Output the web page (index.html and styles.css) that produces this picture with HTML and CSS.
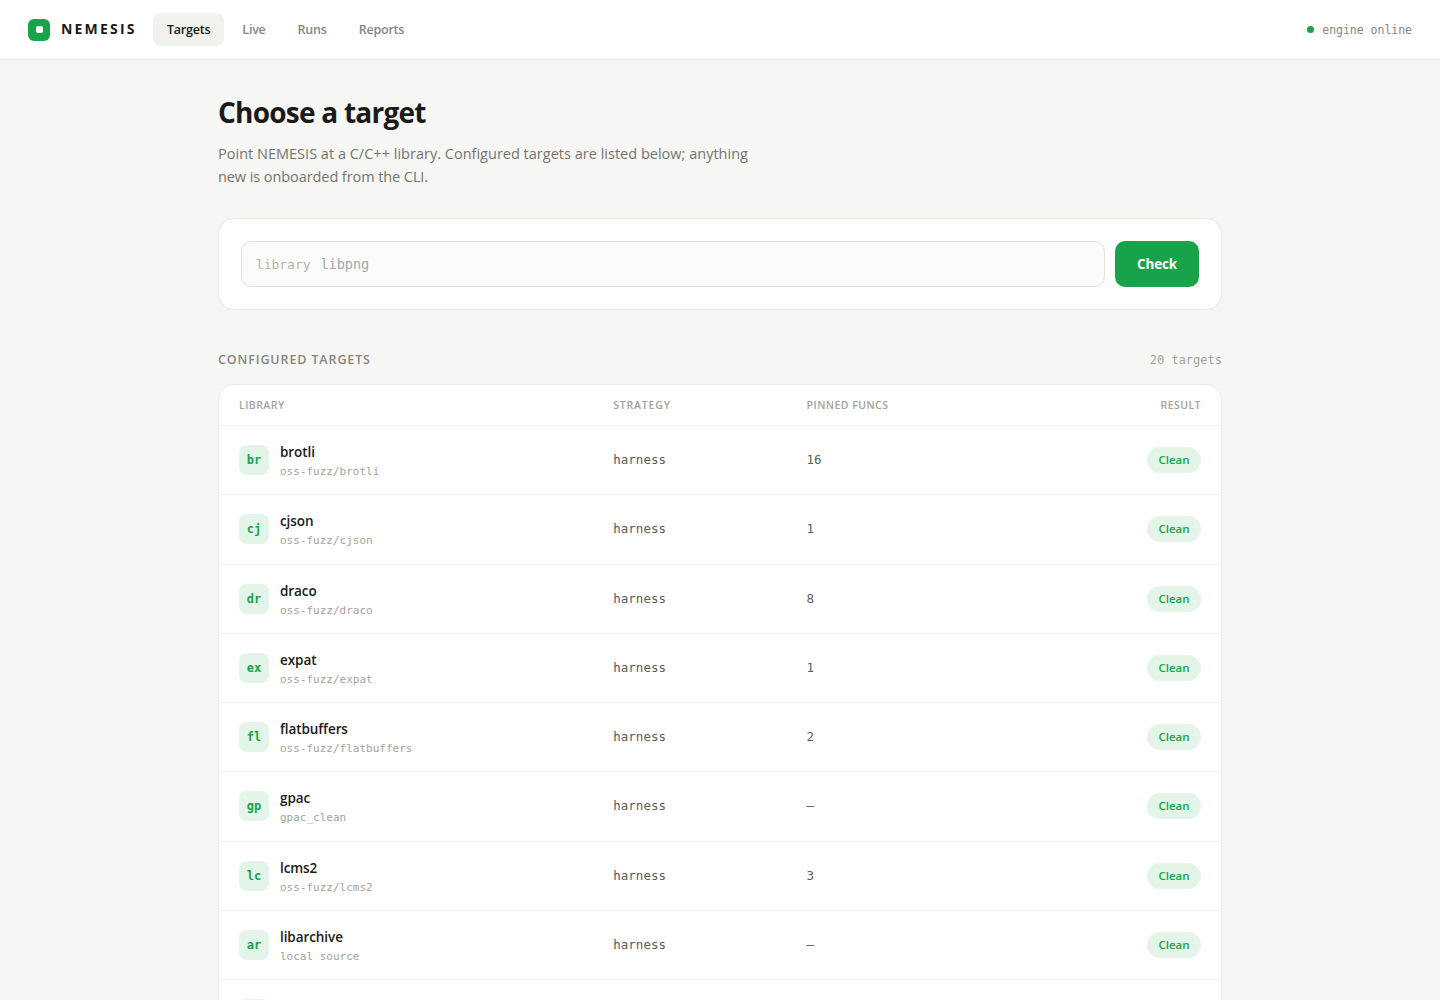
FILE: index.html
```html
<!DOCTYPE html>
<html lang="en">
<head>
<meta charset="utf-8">
<title>NEMESIS</title>
<link rel="stylesheet" href="styles.css">
</head>
<body>
<header class="topbar">
  <div class="brand"><span class="logo"></span><span class="brand-name">NEMESIS</span></div>
  <nav class="nav">
    <a class="active">Targets</a><a>Live</a><a>Runs</a><a>Reports</a>
  </nav>
  <div class="status"><span class="dot"></span><span>engine online</span></div>
</header>
<main class="page">
  <h1>Choose a target</h1>
  <p class="lead">Point NEMESIS at a C/C++ library. Configured targets are listed below; anything<br><span>new is onboarded from the CLI.</span></p>
  <section class="card search">
    <label class="field"><span>library</span><input type="text" placeholder="libpng"></label>
    <button class="check">Check</button>
  </section>
  <div class="section-head"><h2>Configured targets</h2><span>20 targets</span></div>
  <section class="card table">
    <div class="row head"><span>Library</span><span class="wide">Strategy</span><span>Pinned funcs</span><span>Result</span></div>
    <div class="row"><div class="lib"><span class="tile">br</span><div class="names"><b>brotli</b><small>oss-fuzz/brotli</small></div></div><span class="mono">harness</span><span class="mono">16</span><span class="pill">Clean</span></div>
    <div class="row"><div class="lib"><span class="tile">cj</span><div class="names"><b>cjson</b><small>oss-fuzz/cjson</small></div></div><span class="mono">harness</span><span class="mono">1</span><span class="pill">Clean</span></div>
    <div class="row"><div class="lib"><span class="tile">dr</span><div class="names"><b>draco</b><small>oss-fuzz/draco</small></div></div><span class="mono">harness</span><span class="mono">8</span><span class="pill">Clean</span></div>
    <div class="row"><div class="lib"><span class="tile">ex</span><div class="names"><b>expat</b><small>oss-fuzz/expat</small></div></div><span class="mono">harness</span><span class="mono">1</span><span class="pill">Clean</span></div>
    <div class="row"><div class="lib"><span class="tile">fl</span><div class="names"><b>flatbuffers</b><small>oss-fuzz/flatbuffers</small></div></div><span class="mono">harness</span><span class="mono">2</span><span class="pill">Clean</span></div>
    <div class="row"><div class="lib"><span class="tile">gp</span><div class="names"><b>gpac</b><small>gpac_clean</small></div></div><span class="mono">harness</span><span class="mono">—</span><span class="pill">Clean</span></div>
    <div class="row"><div class="lib"><span class="tile">lc</span><div class="names"><b>lcms2</b><small>oss-fuzz/lcms2</small></div></div><span class="mono">harness</span><span class="mono">3</span><span class="pill">Clean</span></div>
    <div class="row"><div class="lib"><span class="tile">ar</span><div class="names"><b>libarchive</b><small>local source</small></div></div><span class="mono">harness</span><span class="mono">—</span><span class="pill">Clean</span></div>
    <div class="row"><div class="lib"><span class="tile"></span></div></div>
  </section>
</main>
</body>
</html>
```
FILE: styles.css
```css
* { box-sizing: border-box; }
html { overflow: hidden; }
body {
  margin: 0;
  height: 1000px;
  overflow: hidden;
  background: #f6f6f4;
  color: #1a1a18;
  font-family: "Open Sans", "Noto Sans", sans-serif;
}
.topbar {
  height: 60px;
  padding: 0 28px;
  display: flex;
  align-items: center;
  background: #fff;
  border-bottom: 1px solid #e8e8e4;
}
.brand { display: flex; align-items: center; gap: 11px; width: 125px; }
.logo {
  width: 22px; height: 22px;
  border-radius: 6px;
  background: #18a34a;
  display: grid;
  place-items: center;
}
.logo::after { content: ""; width: 7px; height: 7px; border-radius: 2px; background: #fff; }
.brand-name { padding-bottom: 2px; font-size: 14px; font-weight: 700; letter-spacing: 2.2px; line-height: 20px; }
.nav { display: flex; gap: 4px; }
.nav a {
  height: 33px;
  padding: 0 14px;
  border-radius: 8px;
  font-size: 12.5px;
  font-weight: 600;
  line-height: 33px;
  letter-spacing: -0.22px;
  color: #86867f;
}
.nav .active { background: #f1f1ed; color: #1a1a18; }
.status {
  margin-left: auto;
  display: flex;
  align-items: center;
  gap: 8px;
  font: 11.5px/16px "DejaVu Sans Mono", monospace;
  letter-spacing: -0.02px;
  color: #86867f;
}
.dot { width: 7px; height: 7px; border-radius: 50%; background: #18a34a; }
.page { width: 1004px; margin: 0 auto; padding-top: 35px; }
h1 { margin: 0; font-size: 28px; font-weight: 700; letter-spacing: -0.77px; line-height: 34px; }
.lead {
  margin: 13px 0 0;
  font-size: 14.5px;
  line-height: 23px;
  letter-spacing: 0.01px;
  white-space: nowrap;
  color: #75756e;
}
.lead span { letter-spacing: -0.08px; }
.card { background: #fff; border: 1px solid #e8e8e4; border-radius: 16px; }
.search { margin-top: 30.1px; height: 92px; padding: 22px; display: flex; gap: 10px; }
.field {
  flex: 1;
  height: 46px;
  padding: 0 14px;
  display: flex;
  align-items: center;
  gap: 10px;
  border: 1px solid #e2e2dd;
  border-radius: 10px;
  background: #fbfbf9;
  font: 13px "DejaVu Sans Mono", monospace;
  letter-spacing: -0.05px;
  color: #b3b3aa;
}
.field input {
  flex: 1;
  padding: 0;
  border: 0;
  outline: 0;
  background: none;
  font: 13.5px "DejaVu Sans Mono", monospace;
}
.field input::placeholder { color: #a3a5b0; }
.check {
  width: 84px; height: 46px;
  border: 0;
  border-radius: 10px;
  background: #18a34a;
  color: #fff;
  font: 700 13.5px "Open Sans", sans-serif;
  letter-spacing: -0.2px;
}
.section-head { margin-top: 40px; height: 20px; display: flex; justify-content: space-between; align-items: center; }
.section-head h2 { margin: 0; padding-bottom: 2px; font-size: 12.5px; font-weight: 600; letter-spacing: 0.88px; text-transform: uppercase; color: #86867f; }
.section-head span { font: 12px "DejaVu Sans Mono", monospace; color: #a3a39b; }
.table { margin-top: 14px; overflow: hidden; }
.row {
  height: 69.25px;
  padding: 0 20px;
  display: grid;
  grid-template-columns: 374.3px 193.3px 1fr auto;
  align-items: center;
  border-bottom: 1px solid #f1f1ee;
}
.head {
  height: 41px;
  border-color: #ecece8;
  font-size: 10.5px;
  font-weight: 600;
  letter-spacing: 0.45px;
  text-transform: uppercase;
  color: #a3a39b;
}
.head .wide { letter-spacing: 0.8px; }
.lib { display: flex; align-items: center; gap: 11px; }
.tile {
  width: 30px; height: 30px;
  border-radius: 8px;
  background: #e3f4e8;
  color: #18a34a;
  font: 700 12px/30px "DejaVu Sans Mono", monospace;
  text-align: center;
}
.names { padding-top: 2px; }
.names b, .names small { display: block; }
.names b { font-size: 13.5px; font-weight: 600; line-height: 20px; letter-spacing: -0.08px; }
.names small { margin-top: 2px; font: 11px/16px "DejaVu Sans Mono", monospace; color: #a3a39b; }
.mono { font: 12.5px/18px "DejaVu Sans Mono", monospace; color: #5d5d57; }
.pill {
  width: 54px; height: 26px;
  border-radius: 13px;
  background: #e3f4e8;
  color: #18a34a;
  font-size: 11.5px;
  font-weight: 600;
  line-height: 26px;
  text-align: center;
}
```
